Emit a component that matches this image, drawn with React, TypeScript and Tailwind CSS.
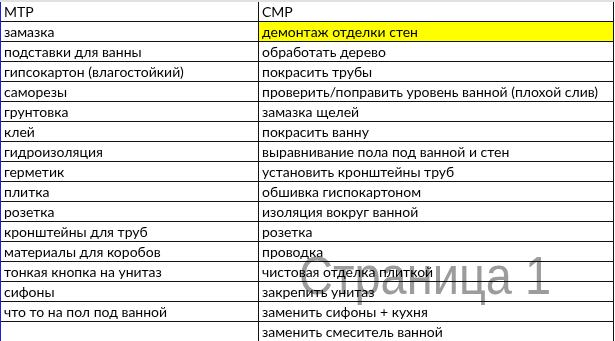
import React from 'react'

const rows: [string, string][] = [
    ['МТР', 'СМР'],
    ['замазка', 'демонтаж отделки стен'],
    ['подставки для ванны', 'обработать дерево'],
    ['гипсокартон (влагостойкий)', 'покрасить трубы'],
    ['саморезы', 'проверить/поправить уровень ванной (плохой слив)'],
    ['грунтовка', 'замазка щелей'],
    ['клей', 'покрасить ванну'],
    ['гидроизоляция', 'выравнивание пола под ванной и стен'],
    ['герметик', 'установить кронштейны труб'],
    ['плитка', 'обшивка гиспокартоном'],
    ['розетка', 'изоляция вокруг ванной'],
    ['кронштейны для труб', 'розетка'],
    ['материалы для коробов', 'проводка'],
    ['тонкая кнопка на унитаз', 'чистовая отделка плиткой'],
    ['сифоны', 'закрепить унитаз'],
    ['что то на пол под ванной', 'заменить сифоны + кухня'],
    ['', 'заменить смеситель ванной'],
]

const App = () => {
    return (
        <div className="relative w-[615px] h-[341px] overflow-hidden bg-white text-[14px] text-black font-['Lato',sans-serif]">
            <div className="h-[2px] bg-[#e1e1e1]" />
            <div className="w-[614px] border-l border-l-[#1f1fd6] border-r border-r-[#111]">
                {rows.map(([a, b], i) => (
                    <div key={i} className="flex h-[20px] border-b border-[#111]">
                        <div className="w-[258px] border-r border-[#111] pl-[3px] leading-[20px] whitespace-nowrap">{a}</div>
                        <div className={`flex-1 pl-[3px] leading-[20px] whitespace-nowrap ${i === 1 ? 'bg-[#ffff00]' : ''}`}>{b}</div>
                    </div>
                ))}
            </div>
            {/* watermark of page break preview */}
            <div className="pointer-events-none absolute left-[299px] top-[248px] origin-left scale-x-[0.87] text-[54px] leading-none text-[#9c9c9c] mix-blend-multiply whitespace-nowrap font-['Liberation_Sans',sans-serif]">
                Страница 1
            </div>
        </div>
    )
}

export default App
